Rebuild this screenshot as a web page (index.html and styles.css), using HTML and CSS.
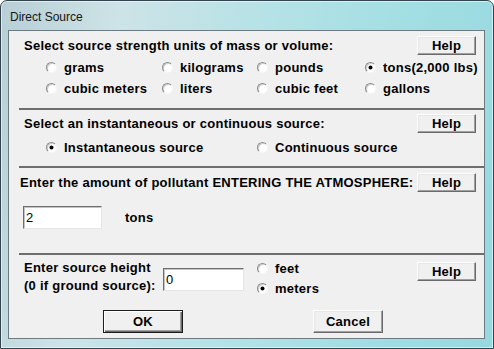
FILE: index.html
```html
<!DOCTYPE html>
<html lang="en">
<head>
    <meta charset="UTF-8">
    <title>Direct Source</title>
    <link rel="stylesheet" href="styles.css">
</head>
<body>
    <div class="window">
        <div class="titlebar">Direct Source</div>

        <div class="client">
            <!-- Units -->
            <div class="section units">
                <div class="head">
                    <span class="caption">Select source strength units of mass or volume:</span>
                    <button class="btn help">Help</button>
                </div>
                <div class="options grid4">
                    <label class="opt"><span class="radio"></span>grams</label>
                    <label class="opt"><span class="radio"></span>kilograms</label>
                    <label class="opt"><span class="radio"></span>pounds</label>
                    <label class="opt"><span class="radio on"></span>tons(2,000 lbs)</label>
                    <label class="opt"><span class="radio"></span>cubic meters</label>
                    <label class="opt"><span class="radio"></span>liters</label>
                    <label class="opt"><span class="radio"></span>cubic feet</label>
                    <label class="opt"><span class="radio"></span>gallons</label>
                </div>
            </div>
            <div class="rule"></div>

            <!-- Source type -->
            <div class="section kind">
                <div class="head">
                    <span class="caption">Select an instantaneous or continuous source:</span>
                    <button class="btn help">Help</button>
                </div>
                <div class="options grid2">
                    <label class="opt"><span class="radio on"></span>Instantaneous source</label>
                    <label class="opt"><span class="radio"></span>Continuous source</label>
                </div>
            </div>
            <div class="rule"></div>

            <!-- Amount -->
            <div class="section amount">
                <div class="head">
                    <span class="caption">Enter the amount of pollutant ENTERING THE ATMOSPHERE:</span>
                    <button class="btn help">Help</button>
                </div>
                <div class="amount-row">
                    <input class="field amount-field" type="text" value="2">
                    <span class="unit">tons</span>
                </div>
            </div>
            <div class="rule"></div>

            <!-- Height -->
            <div class="section height">
                <div class="height-row">
                    <div class="height-label">Enter source height<br>(0 if ground source):</div>
                    <input class="field height-field" type="text" value="0">
                    <div class="options stack">
                        <label class="opt"><span class="radio"></span>feet</label>
                        <label class="opt"><span class="radio on"></span>meters</label>
                    </div>
                    <button class="btn help height-help">Help</button>
                </div>
                <div class="actions">
                    <button class="btn ok">OK</button>
                    <button class="btn cancel">Cancel</button>
                </div>
            </div>
        </div>
    </div>
</body>
</html>
```

FILE: styles.css
```css
* {
    margin: 0;
    padding: 0;
    box-sizing: border-box;
}

body {
    width: 494px;
    height: 349px;
    overflow: hidden;
    background: #fff;
    font-family: 'Liberation Sans', Arial, sans-serif;
    color: #000;
}

/* Window frame */
.window {
    width: 494px;
    height: 349px;
    display: flex;
    flex-direction: column;
    padding: 0 8px 9px 7px;
    border: 1px solid #33444e;
    border-radius: 7px 7px 0 0;
    background: linear-gradient(100deg, #b7cfd5 0%, #cde3e7 22%, #b4e2e6 50%, #a2dee3 75%, #96d9df 100%);
    box-shadow: inset 0 0 0 1px rgba(255, 255, 255, 0.55);
}

.titlebar {
    height: 29px;
    display: flex;
    align-items: center;
    padding: 3px 0 0 2px;
    font-size: 12px;
    color: #151515;
}

.client {
    flex: 1;
    display: flex;
    flex-direction: column;
    border: 1px solid #6c7b82;
    background: #f0f0f0;
}

.rule {
    height: 2px;
    margin-left: 10px;
    background: #6e6e6e;
}

.section {
    padding: 5px 8px 0 15px;
}

.units {
    height: 77px;
}

.kind {
    height: 56px;
    padding-top: 4px;
}

.amount {
    height: 85px;
    padding-left: 11px;
}

.height {
    flex: 1;
    padding-top: 3px;
}

.head {
    display: flex;
    align-items: center;
    justify-content: space-between;
    height: 19px;
}

.caption,
.opt,
.unit,
.height-label,
.btn {
    font-size: 13px;
    font-weight: bold;
    letter-spacing: 0.25px;
}

/* Radio options */
.options {
    margin-left: 22px;
}

.grid4 {
    display: grid;
    grid-template-columns: 116px 95px 108px auto;
    grid-auto-rows: 21px;
    margin-top: 2px;
}

.grid2 {
    display: grid;
    grid-template-columns: 211px auto;
    grid-auto-rows: 20px;
    margin-top: 4px;
}

.stack {
    display: grid;
    grid-auto-rows: 20px;
    margin-left: 13px;
}

.opt {
    display: flex;
    align-items: center;
    gap: 7px;
    white-space: nowrap;
}

.radio {
    position: relative;
    width: 11px;
    height: 11px;
    flex: none;
    border-radius: 50%;
    border: 1px solid;
    border-color: #8a8a8a #f6f6f6 #f6f6f6 #8a8a8a;
    background: #fff;
    box-shadow: inset 1px 1px 0 #cfcfcf;
}

.radio.on::after {
    content: '';
    position: absolute;
    left: 3px;
    top: 3px;
    width: 3px;
    height: 3px;
    border-radius: 50%;
    background: #000;
    box-shadow: 0 0 0 0.5px #000;
}

/* Buttons */
.btn {
    font-family: 'Liberation Sans', Arial, sans-serif;
    color: #000;
    background: #f0f0f0;
    border: 1px solid;
    border-color: #fff #6a6a6a #6a6a6a #fff;
    box-shadow: inset -1px -1px 0 #a0a0a0, inset 1px 1px 0 #e6e6e6;
}

.help {
    width: 59px;
    height: 19px;
    flex: none;
}

.ok,
.cancel {
    height: 23px;
}

.ok {
    width: 80px;
    border-color: #1c1c1c;
    box-shadow: inset 1px 1px 0 #fff, inset -1px -1px 0 #6a6a6a, inset -2px -2px 0 #a0a0a0;
}

.cancel {
    width: 70px;
}

/* Text fields */
.field {
    height: 23px;
    padding-left: 2px;
    border: 1px solid;
    border-color: #6e6e6e #e6e6e6 #e6e6e6 #6e6e6e;
    box-shadow: inset 1px 1px 0 #c4c4c4;
    background: #fff;
    font-family: 'Liberation Sans', Arial, sans-serif;
    font-size: 13px;
    color: #000;
    outline: none;
}

.amount-row {
    display: flex;
    align-items: center;
    gap: 23px;
    margin-top: 14px;
    padding-left: 3px;
}

.amount-field {
    width: 79px;
}

.height-row {
    display: flex;
    align-items: flex-start;
}

.height-label {
    width: 139px;
    margin-top: 1px;
    line-height: 18px;
}

.height-field {
    width: 81px;
    margin-top: 10px;
}

.height-help {
    margin-left: auto;
    margin-top: 4px;
}

.actions {
    display: flex;
    gap: 130px;
    margin-top: 12px;
    padding-left: 79px;
}
```
